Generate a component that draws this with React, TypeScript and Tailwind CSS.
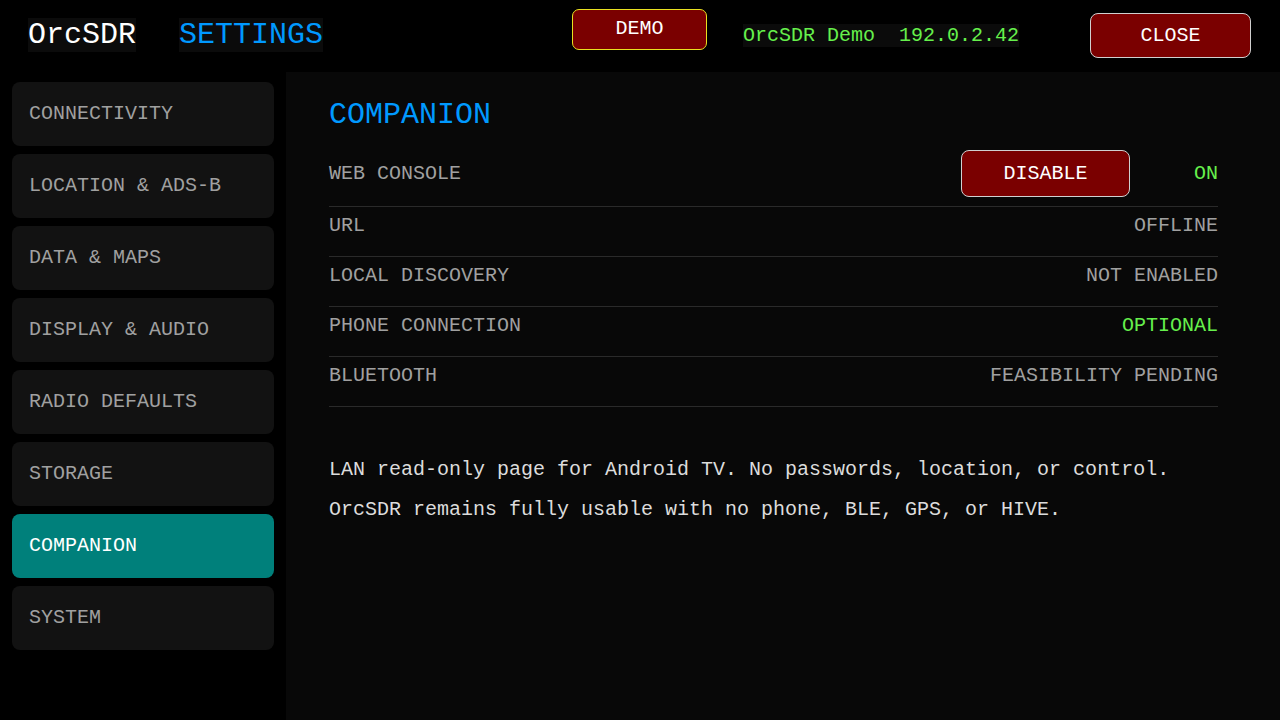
import { useState } from 'react'

const SECTIONS = [
  'CONNECTIVITY',
  'LOCATION & ADS-B',
  'DATA & MAPS',
  'DISPLAY & AUDIO',
  'RADIO DEFAULTS',
  'STORAGE',
  'COMPANION',
  'SYSTEM',
]

type Row = { label: string; value: string; ok?: boolean }

const ROWS: Row[] = [
  { label: 'URL', value: 'OFFLINE' },
  { label: 'LOCAL DISCOVERY', value: 'NOT ENABLED' },
  { label: 'PHONE CONNECTION', value: 'OPTIONAL', ok: true },
  { label: 'BLUETOOTH', value: 'FEASIBILITY PENDING' },
]

const mono = { fontFamily: '"Liberation Mono", "DejaVu Sans Mono", monospace' }

function Header() {
  return (
    <header className="flex h-[72px] items-center bg-black pl-[28px]">
      <div className="w-[151px] pt-[2px]">
        <span className="bg-[#0b0b0b] text-[30px] leading-[24px] text-white">OrcSDR</span>
      </div>
      <div className="w-[393px] pt-[2px]">
        <span className="bg-[#0b0b0b] text-[30px] leading-[24px] text-[#0099ff]">SETTINGS</span>
      </div>
      <button className="mb-[14px] flex h-[41px] w-[135px] items-center justify-center rounded-[7px] border border-[#e8e020] bg-[#7a0000] text-[20px] text-white">
        DEMO
      </button>
      <div className="ml-[36px] w-[347px] pt-[1px]">
        <span className="bg-[#0b0b0b] text-[20px] leading-[20px] text-[#66f04c]">
          OrcSDR Demo{'\u00a0\u00a0'}192.0.2.42
        </span>
      </div>
      <button className="mb-[1px] flex h-[45px] w-[161px] items-center justify-center rounded-[8px] border border-[#d0d0d0] bg-[#7a0000] text-[20px] text-white">
        CLOSE
      </button>
    </header>
  )
}

export default function App() {
  const [active, setActive] = useState('COMPANION')
  const [consoleOn, setConsoleOn] = useState(true)

  return (
    <div className="flex h-[720px] w-[1280px] flex-col overflow-hidden bg-black" style={mono}>
      <Header />

      <div className="flex flex-1">
        {/* section list */}
        <nav className="flex w-[286px] flex-col gap-[8px] px-[12px] pt-[10px]">
          {SECTIONS.map((s) => (
            <button
              key={s}
              onClick={() => setActive(s)}
              className={
                s === active
                  ? 'flex h-[64px] items-center rounded-[8px] bg-[#00807b] pl-[17px] text-left text-[20px] text-white'
                  : 'flex h-[64px] items-center rounded-[8px] bg-[#121212] pl-[17px] text-left text-[20px] text-[#a0a0a0]'
              }
            >
              {s}
            </button>
          ))}
        </nav>

        <main className="flex-1 bg-[#080808] pl-[43px] pr-[62px] pt-[25px]">
          <h1 className="mb-[17px] text-[30px] leading-[36px] text-[#0099ff]">COMPANION</h1>

          <div className="flex items-center border-b border-[#2a2a2a] pb-[9px] text-[20px]">
            <span className="flex-1 pt-[1px] text-[#a0a0a0]">WEB CONSOLE</span>
            <button
              onClick={() => setConsoleOn((v) => !v)}
              className="flex h-[47px] w-[169px] items-center justify-center rounded-[8px] border border-[#d0d0d0] bg-[#7a0000] text-white"
            >
              {consoleOn ? 'DISABLE' : 'ENABLE'}
            </button>
            <span className={consoleOn ? 'ml-[64px] pt-[1px] text-[#66f04c]' : 'ml-[64px] pt-[1px] text-[#a0a0a0]'}>
              {consoleOn ? 'ON' : 'OFF'}
            </span>
          </div>

          {ROWS.map((r) => (
            <div
              key={r.label}
              className="flex h-[50px] items-start justify-between border-b border-[#2a2a2a] pt-[7px] text-[20px] leading-[24px]"
            >
              <span className="text-[#a0a0a0]">{r.label}</span>
              <span className={r.ok ? 'text-[#66f04c]' : 'text-[#a0a0a0]'}>{r.value}</span>
            </div>
          ))}

          <div className="mt-[43px] text-[20px] leading-[40px] text-[#dcdcdc]">
            <p>LAN read-only page for Android TV. No passwords, location, or control.</p>
            <p>OrcSDR remains fully usable with no phone, BLE, GPS, or HIVE.</p>
          </div>
        </main>
      </div>
    </div>
  )
}
